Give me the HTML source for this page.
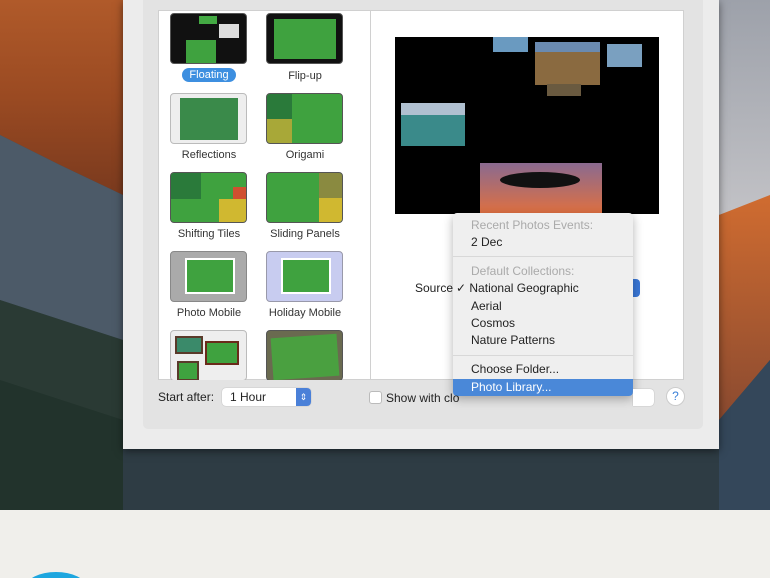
<!DOCTYPE html>
<html style="width:770px;height:578px;overflow:hidden"><head><meta charset="utf-8"><style>
*{margin:0;padding:0;box-sizing:border-box}
body{width:770px;height:578px;overflow:hidden;background:#f0efeb;position:relative;font-family:"Liberation Sans",sans-serif;font-size:12px;color:#222}
.a{position:absolute}
.th{position:absolute;width:77px;height:51px;border-radius:4px;border:1px solid #555;overflow:hidden;background:#3fa23f}
.lb{position:absolute;width:110px;text-align:center;font-size:11px;color:#333}
.mi{position:absolute;left:18px;font-size:12px;color:#222}
.g{color:#aaa}
</style></head><body>
<svg class="a" style="left:0;top:0" width="770" height="512">
<defs>
<linearGradient id="o" x1="0" y1="0" x2="0" y2="1"><stop offset="0" stop-color="#b05a2a"/><stop offset="0.5" stop-color="#9a4a22"/><stop offset="1" stop-color="#7a3a1e"/></linearGradient>
<linearGradient id="s" x1="0" y1="0" x2="0" y2="1"><stop offset="0" stop-color="#9da1aa"/><stop offset="1" stop-color="#c2c2c6"/></linearGradient>
<linearGradient id="r" x1="0" y1="0" x2="0" y2="1"><stop offset="0" stop-color="#d06c30"/><stop offset="1" stop-color="#8a4a30"/></linearGradient>
</defs>
<path d="M0 0H770V510H12Q0 510 0 498Z" fill="#37474f"/>
<polygon points="0,0 123,0 123,195 60,165 0,135" fill="url(#o)"/>
<polygon points="0,135 60,165 123,195 123,340 0,300" fill="#4c5a68"/>
<polygon points="0,300 123,340 123,510 0,510" fill="#2a3a34"/>
<polygon points="0,380 123,420 123,510 0,510" fill="#22332c"/>
<polygon points="123,449 770,449 770,510 123,510" fill="#2e3c44"/>
<polygon points="719,0 770,0 770,200 719,215" fill="url(#s)"/>
<polygon points="719,215 770,195 770,360 719,420" fill="url(#r)"/>
<polygon points="719,420 770,360 770,510 719,510" fill="#34475a"/>
</svg>
<div class="a" style="left:26px;top:572px;width:60px;height:30px;border-radius:50%;background:#1da6df"></div>
<div class="a" style="left:123px;top:0;width:596px;height:449px;background:#ececec;box-shadow:0 2px 8px rgba(0,0,0,.5)"></div>
<div class="a" style="left:143px;top:0;width:560px;height:429px;background:#e3e3e3;border-radius:0 0 5px 5px"></div>
<div class="a" style="left:158px;top:10px;width:526px;height:370px;background:#fff;border:1px solid #d0d0d0"></div>
<div class="a" style="left:370px;top:10px;width:1px;height:370px;background:#d0d0d0"></div>
<div class="a" style="left:158px;top:10px;width:212px;height:370px;overflow:hidden">
<div class="th" style="left:12px;top:3px;background:#111"><div class="a" style="left:15px;top:26px;width:30px;height:24px;background:#3fa23f"></div><div class="a" style="left:48px;top:10px;width:20px;height:14px;background:#ddd"></div><div class="a" style="left:28px;top:2px;width:18px;height:8px;background:#4a4"></div></div>
<div class="lb" style="left:-4px;top:59px"><span style="background:#3d8fe0;color:#fff;border-radius:8px;padding:1px 7px">Floating</span></div>
<div class="th" style="left:108px;top:3px;background:#111"><div class="a" style="left:7px;top:5px;width:62px;height:40px;background:#3fa23f"></div></div>
<div class="lb" style="left:92px;top:60px">Flip-up</div>
<div class="th" style="left:12px;top:83px;background:#eee;border-color:#bbb"><div class="a" style="left:9px;top:4px;width:58px;height:42px;background:#3a8a4a"></div></div>
<div class="lb" style="left:-4px;top:139px">Reflections</div>
<div class="th" style="left:108px;top:83px"><div class="a" style="left:0;top:0;width:25px;height:25px;background:#2a7a3a"></div><div class="a" style="left:0;top:25px;width:25px;height:26px;background:#a8a838"></div></div>
<div class="lb" style="left:92px;top:139px">Origami</div>
<div class="th" style="left:12px;top:162px"><div class="a" style="left:0;top:0;width:30px;height:26px;background:#2a7a3a"></div><div class="a" style="left:62px;top:14px;width:15px;height:12px;background:#d05030"></div><div class="a" style="left:48px;top:26px;width:29px;height:25px;background:#d0b830"></div></div>
<div class="lb" style="left:-4px;top:218px">Shifting Tiles</div>
<div class="th" style="left:108px;top:162px"><div class="a" style="left:52px;top:0;width:25px;height:25px;background:#8a8a40"></div><div class="a" style="left:52px;top:25px;width:25px;height:26px;background:#d0b830"></div></div>
<div class="lb" style="left:92px;top:218px">Sliding Panels</div>
<div class="th" style="left:12px;top:241px;background:#aaa;border-color:#888"><div class="a" style="left:14px;top:6px;width:50px;height:36px;background:#3fa23f;border:2px solid #fff"></div></div>
<div class="lb" style="left:-4px;top:297px">Photo Mobile</div>
<div class="th" style="left:108px;top:241px;background:#c8ccf0;border-color:#99a"><div class="a" style="left:14px;top:6px;width:50px;height:36px;background:#3fa23f;border:2px solid #fff"></div></div>
<div class="lb" style="left:92px;top:297px">Holiday Mobile</div>
<div class="th" style="left:12px;top:320px;background:#eee;border-color:#bbb"><div class="a" style="left:4px;top:5px;width:28px;height:18px;background:#3a8a6a;border:2px solid #5a3a2a"></div><div class="a" style="left:34px;top:10px;width:34px;height:24px;background:#3fa23f;border:2px solid #6a2a1a"></div><div class="a" style="left:6px;top:30px;width:22px;height:20px;background:#3fa23f;border:2px solid #5a3a2a"></div></div>
<div class="th" style="left:108px;top:320px;background:#6a6a50"><div class="a" style="left:5px;top:5px;width:66px;height:42px;background:#4aa040;transform:rotate(-4deg)"></div></div>
</div>
<div class="a" style="left:395px;top:37px;width:264px;height:177px;background:#000;overflow:hidden">
<div class="a" style="left:98px;top:0;width:35px;height:15px;background:#6a9ac0"></div>
<div class="a" style="left:140px;top:5px;width:65px;height:43px;background:#8a6a40;border-top:10px solid #6a8ab0"></div>
<div class="a" style="left:152px;top:47px;width:34px;height:12px;background:#6a5a40"></div>
<div class="a" style="left:212px;top:7px;width:35px;height:23px;background:#7aa0c0"></div>
<div class="a" style="left:6px;top:66px;width:64px;height:43px;background:#3a8a8a;border-top:12px solid #b0c0d0"></div>
<div class="a" style="left:85px;top:126px;width:122px;height:51px;background:linear-gradient(#8a6a90,#e07040)"></div>
<div class="a" style="left:105px;top:135px;width:80px;height:16px;background:#111;border-radius:50%"></div>
</div>
<div class="a" style="left:415px;top:281px;font-size:12px">Source</div>
<div class="a" style="left:630px;top:279px;width:10px;height:18px;background:#3a78d8;border-radius:0 4px 4px 0"></div>
<div class="a" style="left:453px;top:213px;width:180px;height:183px;background:#efefef;border-radius:4px;box-shadow:0 3px 10px rgba(0,0,0,.3);overflow:hidden">
<div class="mi g" style="top:5px">Recent Photos Events:</div>
<div class="mi" style="top:22px">2 Dec</div>
<div class="a" style="left:0;top:43px;width:180px;height:1px;background:#d8d8d8"></div>
<div class="mi g" style="top:51px">Default Collections:</div>
<div class="mi" style="top:68px;left:3px">✓ National Geographic</div>
<div class="mi" style="top:86px">Aerial</div>
<div class="mi" style="top:103px">Cosmos</div>
<div class="mi" style="top:120px">Nature Patterns</div>
<div class="a" style="left:0;top:142px;width:180px;height:1px;background:#d8d8d8"></div>
<div class="mi" style="top:149px">Choose Folder...</div>
<div class="a" style="left:0;top:166px;width:180px;height:17px;background:#4a88d8"></div>
<div class="mi" style="top:167px;color:#fff">Photo Library...</div>
</div>
<div class="a" style="left:158px;top:390px">Start after:</div>
<div class="a" style="left:222px;top:388px;width:89px;height:18px;background:#fff;border-radius:4px;box-shadow:0 0 1px #999"><span class="a" style="left:8px;top:2px">1 Hour</span><div class="a" style="left:74px;top:0;width:15px;height:18px;background:#4a80d8;border-radius:0 4px 4px 0;color:#fff;font-size:9px;text-align:center;line-height:18px">⇕</div></div>
<div class="a" style="left:369px;top:391px;width:13px;height:13px;background:#fff;border:1px solid #bbb;border-radius:3px"></div>
<div class="a" style="left:386px;top:391px">Show with clo</div>
<div class="a" style="left:633px;top:389px;width:21px;height:17px;background:#fff;border-radius:0 4px 4px 0;box-shadow:0 0 1px #999"></div>
<div class="a" style="left:666px;top:387px;width:19px;height:19px;border-radius:50%;background:#fff;border:1px solid #ccc;color:#3a80d8;text-align:center;line-height:17px;font-size:12px">?</div>
</body></html>
